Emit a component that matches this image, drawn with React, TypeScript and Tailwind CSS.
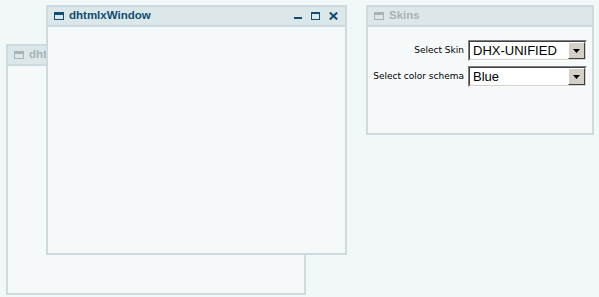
import type { ReactNode } from 'react';

function WinIcon({ active }: { active: boolean }) {
  const c = active ? '#0f4e72' : '#a8b3b7';
  return (
    <svg width="10" height="8" viewBox="0 0 10 8" className="shrink-0">
      <rect x="0.5" y="0.5" width="9" height="7" fill="none" stroke={c} />
      <rect x="0" y="0" width="10" height="3" fill={c} />
    </svg>
  );
}

function WinButtons() {
  return (
    <div className="flex items-center gap-[9px] pr-[7px]">
      <svg width="8" height="8" viewBox="0 0 8 8">
        <rect x="0" y="5" width="8" height="2" fill="#0f4e72" />
      </svg>
      <svg width="9" height="8" viewBox="0 0 9 8">
        <rect x="0.5" y="0.5" width="8" height="7" fill="none" stroke="#0f4e72" />
        <rect x="0" y="0" width="9" height="2" fill="#0f4e72" />
      </svg>
      <svg width="9" height="8" viewBox="0 0 9 8">
        <path d="M0.8 0.5 L8.2 7.5 M8.2 0.5 L0.8 7.5" stroke="#0f4e72" strokeWidth="2" />
      </svg>
    </div>
  );
}

function Header({ title, active }: { title: string; active: boolean }) {
  return (
    <div className="flex h-[20px] shrink-0 items-center justify-between overflow-hidden border-b-2 border-[#cddbe0] bg-[#dce7ea]">
      <div className="flex items-center gap-[5px] pl-[6px]">
        <WinIcon active={active} />
        <span
          className={`whitespace-nowrap font-['Liberation_Sans',Arial,sans-serif] text-[11.5px] font-bold ${
            active ? 'text-[#0f4e72]' : 'text-[#a8b3b7]'
          }`}
        >
          {title}
        </span>
      </div>
      {active && <WinButtons />}
    </div>
  );
}

function Select({ value }: { value: string }) {
  return (
    <div className="flex h-[21px] w-[119px] border-t border-l border-t-[#808080] border-l-[#808080] border-b border-r border-b-white border-r-white">
      <div className="flex flex-1 items-center border-t border-l border-t-[#404040] border-l-[#404040] border-b border-r border-b-[#d4d0c8] border-r-[#d4d0c8] bg-white">
        <span className="flex-1 pl-[3px] font-['Liberation_Sans',Arial,sans-serif] text-[13px] leading-none text-black">
          {value}
        </span>
        <div className="flex h-full w-[17px] items-center justify-center border-t border-l border-t-white border-l-white border-b border-r border-b-[#404040] border-r-[#404040] bg-[#d4d0c8]">
          <svg width="7" height="4" viewBox="0 0 7 4">
            <path d="M0 0 H7 L3.5 4 Z" fill="#000" />
          </svg>
        </div>
      </div>
    </div>
  );
}

function Window({ className, title, active, children }: { className: string; title: string; active: boolean; children?: ReactNode }) {
  return (
    <div className={`absolute flex flex-col border-2 border-[#cddbe0] bg-[#f5f9fa] ${className}`}>
      <Header title={title} active={active} />
      <div className="flex-1">{children}</div>
    </div>
  );
}

export default function App() {
  const rows: { label: string; value: string }[] = [
    { label: 'Select Skin', value: 'DHX-UNIFIED' },
    { label: 'Select color schema', value: 'Blue' },
  ];

  return (
    <div className="relative h-[297px] w-[599px] overflow-hidden bg-[#f2f7f8]">
      <Window className="left-[6px] top-[44px] h-[251px] w-[300px]" title="dhtmlxWindow" active={false} />
      <Window className="left-[46px] top-[5px] h-[250px] w-[301px]" title="dhtmlxWindow" active />
      <Window className="left-[366px] top-[5px] h-[130px] w-[228px]" title="Skins" active={false}>
        <div className="flex flex-col items-end gap-[5px] pr-[5px] pt-[13px]">
          {rows.map((row) => (
            <div key={row.label} className="flex items-center gap-[4px]">
              <span className="whitespace-nowrap font-['DejaVu_Sans',sans-serif] text-[9px] text-black">{row.label}</span>
              <Select value={row.value} />
            </div>
          ))}
        </div>
      </Window>
    </div>
  );
}
